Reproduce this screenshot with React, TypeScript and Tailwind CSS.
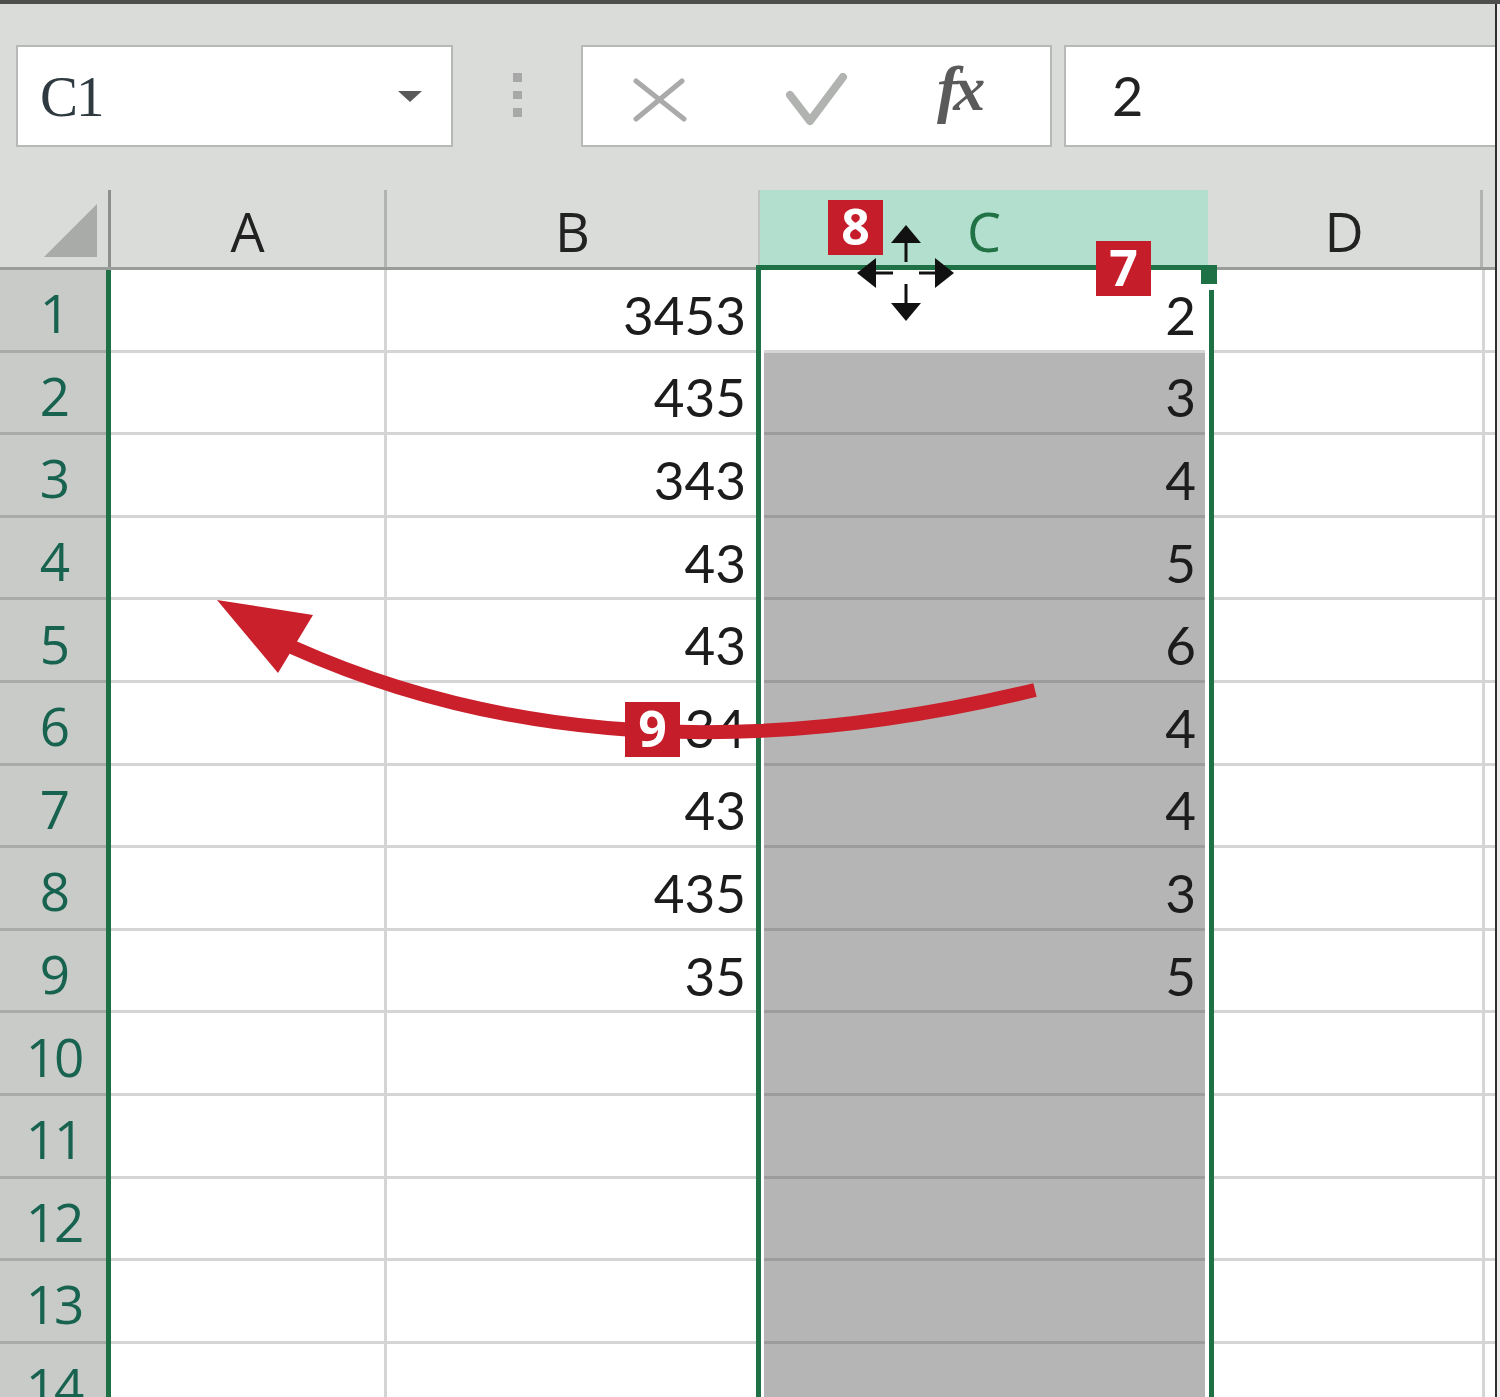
import React from "react";

const rows: { n: number; b: string; c: string }[] = [
  { n: 1, b: "3453", c: "2" },
  { n: 2, b: "435", c: "3" },
  { n: 3, b: "343", c: "4" },
  { n: 4, b: "43", c: "5" },
  { n: 5, b: "43", c: "6" },
  { n: 6, b: "34", c: "4" },
  { n: 7, b: "43", c: "4" },
  { n: 8, b: "435", c: "3" },
  { n: 9, b: "35", c: "5" },
  { n: 10, b: "", c: "" },
  { n: 11, b: "", c: "" },
  { n: 12, b: "", c: "" },
  { n: 13, b: "", c: "" },
  { n: 14, b: "", c: "" },
];

const headFont = "font-['Open_Sans',sans-serif]";
const cellFont = "font-['Lato',sans-serif]";

function Badge({ label, className }: { label: string; className: string }) {
  return (
    <div
      className={`absolute w-[55px] h-[55px] bg-[#c61d2b] text-white flex items-center justify-center font-['Open_Sans',sans-serif] font-bold text-[50px] leading-none ${className}`}
    >
      <span className="-mt-[3px]">{label}</span>
    </div>
  );
}

export default function App() {
  return (
    <div className="relative w-[1500px] h-[1397px] overflow-hidden bg-[#d9dcd9] flex flex-col">
      <div className="h-[4px] bg-[#4e4e4e] shrink-0" />
      <div className="flex flex-1 min-h-0">
        <div className="w-[1495px] flex flex-col">
          {/* Formula bar */}
          <div className="h-[184px] shrink-0 flex items-start pt-[41px] pl-[16px]">
            <div className="w-[437px] h-[102px] bg-white border-2 border-[#b7b9b7] flex items-center pl-[22px] pr-[28px]">
              <span className="font-['Liberation_Serif',serif] text-[57px] leading-none text-[#2e3a40] tracking-[-2px]">
                C1
              </span>
              <div className="flex-1" />
              <svg width="26" height="14" viewBox="0 0 26 14">
                <polygon points="1,2 25,2 13,13" fill="#5a5a5a" />
              </svg>
            </div>
            <div className="w-[128px] h-[102px] flex flex-col items-center pt-[28px] gap-[9px]">
              <div className="w-[9px] h-[9px] bg-[#a8a8a8]" />
              <div className="w-[9px] h-[8px] bg-[#a8a8a8]" />
              <div className="w-[9px] h-[9px] bg-[#a8a8a8]" />
            </div>
            <div className="w-[471px] h-[102px] bg-white border-2 border-[#b7b9b7] relative">
              <svg className="absolute left-[48px] top-[31px]" width="58" height="46" viewBox="0 0 58 46">
                <path d="M5 3 L53 41 M51 3 L5 41" stroke="#a9aaa9" strokeWidth="5" strokeLinecap="round" />
              </svg>
              <svg className="absolute left-[200px] top-[26px]" width="66" height="56" viewBox="0 0 66 56">
                <path d="M7 22 L27 48 L60 4" stroke="#b1b3b1" strokeWidth="8" fill="none" strokeLinejoin="round" strokeLinecap="round" />
              </svg>
              <span className="absolute left-[354px] top-[10px] font-['Liberation_Serif',serif] italic font-bold text-[64px] leading-none text-[#5a5a5a] tracking-[-5px]">
                fx
              </span>
            </div>
            <div className="ml-[12px] flex-1 h-[102px] bg-white border-2 border-r-0 border-[#b7b9b7] flex items-center pl-[46px]">
              <span className={`${cellFont} text-[54px] leading-none text-[#222]`}>2</span>
            </div>
          </div>

          {/* Column headers */}
          <div className={`h-[82px] shrink-0 flex pt-[2px] border-b-[3px] border-[#9a9c9a] bg-[#dadcda] ${headFont}`}>
            <div className="w-[111px] border-r-[3px] border-[#8e908e] flex items-end justify-end pb-[9px] pr-[10px]">
              <svg width="54" height="54" viewBox="0 0 54 54">
                <polygon points="53,0 53,53 0,53" fill="#a9aba9" />
              </svg>
            </div>
            <div className="w-[276px] border-r-[3px] border-[#b2b4b2] flex items-center justify-center text-[54px] leading-none text-[#222]">
              <span className="mt-[4px]">A</span>
            </div>
            <div className="w-[373px] border-r-[2px] border-[#c0c2c0] flex items-center justify-center text-[54px] leading-none text-[#222]">
              <span className="mt-[4px]">B</span>
            </div>
            <div className="w-[448px] bg-[#b3dfcf] flex items-center justify-center text-[54px] leading-none text-[#217346]">
              <span className="mt-[4px]">C</span>
            </div>
            <div className="w-[275px] border-r-[3px] border-[#b2b4b2] flex items-center justify-center text-[54px] leading-none text-[#222]">
              <span className="mt-[4px]">D</span>
            </div>
            <div className="flex-1" />
          </div>

          {/* Rows */}
          <div className="flex-1 flex flex-col">
            {rows.map((r) => (
              <div key={r.n} className="h-[82.6px] shrink-0 flex">
                <div className={`w-[106px] bg-[#c9cbc9] border-b-[3px] border-[#a9aba9] flex items-center justify-center pl-[2px] text-[53px] leading-none text-[#17634f] tracking-[-2px] ${headFont}`}>
                  <span className="mt-[6px]">{r.n}</span>
                </div>
                <div className="w-[5px] bg-[#1e7145]" />
                <div className="w-[276px] bg-white border-b-[3px] border-r-[3px] border-[#d5d5d5]" />
                <div className={`w-[370px] bg-white border-b-[3px] border-[#d5d5d5] flex items-center justify-end pr-[11px] text-[53px] leading-none text-[#1c1c1c] ${cellFont}`}>
                  <span className="mt-[9px]">{r.b}</span>
                </div>
                <div className="w-[456px] bg-white pl-[7px] pr-[8px] flex flex-col">
                  <div
                    className={`flex-1 flex items-center justify-end pr-[9px] text-[53px] leading-none text-[#1c1c1c] border-b-[3px] ${cellFont} ${
                      r.n === 1 ? "bg-white border-[#d5d5d5]" : "bg-[#b4b5b4] border-[#9b9c9b]"
                    }`}
                  >
                    <span className="mt-[9px]">{r.c}</span>
                  </div>
                </div>
                <div className="w-[272px] bg-white border-b-[3px] border-r-[3px] border-[#d5d5d5]" />
                <div className="flex-1 bg-white border-b-[3px] border-[#d5d5d5]" />
              </div>
            ))}
          </div>
        </div>
        <div className="w-[2px] bg-[#2e2e2e]" />
        <div className="flex-1 bg-[#ececec]" />
      </div>

      {/* Selection outline of column C */}
      <div className="absolute left-[756px] top-[265px] w-[458px] h-[5px] bg-[#1e7145]" />
      <div className="absolute left-[756px] top-[265px] w-[5px] h-[1132px] bg-[#1e7145]" />
      <div className="absolute left-[1209px] top-[290px] w-[5px] h-[1107px] bg-[#1e7145]" />
      <div className="absolute left-[1204px] top-[284px] w-[14px] h-[6px] bg-white" />
      <div className="absolute left-[1201px] top-[265px] w-[16px] h-[19px] bg-[#1e7145]" />

      {/* Move cursor */}
      <svg className="absolute left-[850px] top-[220px]" width="110" height="110" viewBox="850 220 110 110">
        <g fill="#111">
          <polygon points="906,225 921,243 891,243" />
          <rect x="904.5" y="242" width="3" height="20" />
          <polygon points="906,321 921,303 891,303" />
          <rect x="904.5" y="284" width="3" height="20" />
          <polygon points="857,273 876,258 876,288" />
          <rect x="875" y="271.5" width="18" height="3" />
          <polygon points="954,273 935,258 935,288" />
          <rect x="919" y="271.5" width="17" height="3" />
        </g>
      </svg>

      {/* Red arrow */}
      <svg className="absolute left-0 top-0 pointer-events-none" width="1500" height="1397" viewBox="0 0 1500 1397">
        <path d="M1035 690 C 850 735, 570 772, 292 647" stroke="#c9202c" strokeWidth="14" fill="none" />
        <polygon points="217,600 313,615 278,673" fill="#c9202c" />
      </svg>

      <Badge label="8" className="left-[828px] top-[200px]" />
      <Badge label="7" className="left-[1096px] top-[241px]" />
      <Badge label="9" className="left-[625px] top-[702px]" />
    </div>
  );
}
